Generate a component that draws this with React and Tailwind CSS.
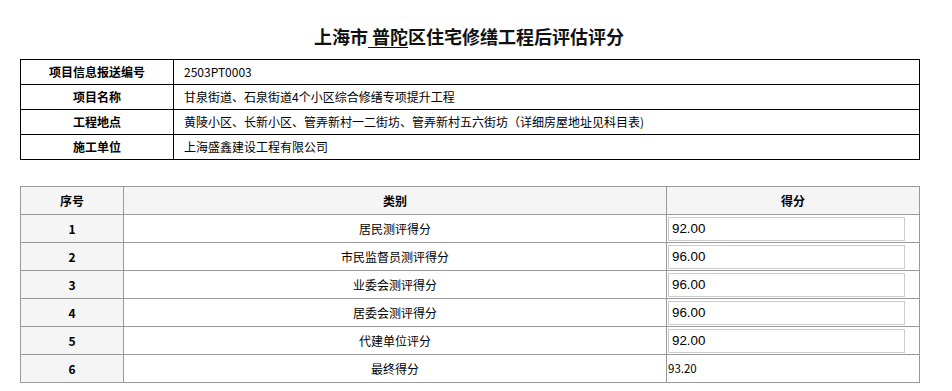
export default function App() {
  const info = [
    ["项目信息报送编号", "2503PT0003"],
    ["项目名称", "甘泉街道、石泉街道4个小区综合修缮专项提升工程"],
    ["工程地点", "黄陵小区、长新小区、管弄新村一二街坊、管弄新村五六街坊（详细房屋地址见科目表)"],
    ["施工单位", "上海盛鑫建设工程有限公司"],
  ];
  const rows = [
    ["1", "居民测评得分", "92.00"],
    ["2", "市民监督员测评得分", "96.00"],
    ["3", "业委会测评得分", "96.00"],
    ["4", "居委会测评得分", "96.00"],
    ["5", "代建单位评分", "92.00"],
  ];
  const font = { fontFamily: '"Noto Sans CJK SC", "Noto Sans", sans-serif' };
  return (
    <div className="w-[952px] h-[391px] bg-white text-black px-[20px] pt-[24px]" style={font}>
      <div className="flex justify-center text-[18px] leading-[24px] font-bold text-[#111] mb-[11px] pr-[14px]">
        <span>上海市</span>
        <span className="underline underline-offset-[3px] decoration-[1px]">&nbsp;普陀</span>
        <span>区住宅修缮工程后评估评分</span>
      </div>
      <div className="w-[900px] grid grid-cols-[153px_1fr] border-l border-t border-black text-[12px]">
        {info.map(([k, v]) => (
          <div key={k} className="contents">
            <div className="h-[25px] border-r border-b border-black flex items-center justify-center font-bold">
              {k}
            </div>
            <div className="h-[25px] border-r border-b border-black flex items-center pl-[10px]">
              {v}
            </div>
          </div>
        ))}
      </div>
      <div className="mt-[26px] w-[900px] grid grid-cols-[103px_543px_1fr] border-l border-t border-[#999] text-[12px]">
        <div className="h-[28px] border-r border-b border-[#999] bg-[#f5f5f5] flex items-center justify-center font-bold">序号</div>
        <div className="h-[28px] border-r border-b border-[#999] bg-[#f5f5f5] flex items-center justify-center font-bold">类别</div>
        <div className="h-[28px] border-r border-b border-[#999] bg-[#f5f5f5] flex items-center justify-center font-bold">得分</div>
        {rows.map(([n, c, s]) => (
          <div key={n} className="contents">
            <div className="h-[28px] border-r border-b border-[#999] bg-[#f5f5f5] flex items-center justify-center font-bold">{n}</div>
            <div className="h-[28px] border-r border-b border-[#999] flex items-center justify-center">{c}</div>
            <div className="h-[28px] border-r border-b border-[#999] flex items-center pl-[1px]">
              <input
                readOnly
                value={s}
                className="w-[237px] h-[24px] border border-[#ccc] px-[3px] text-[13.33px] text-black outline-none"
                style={{ fontFamily: '"Liberation Sans", Arial, sans-serif' }}
              />
            </div>
          </div>
        ))}
        <div className="h-[28px] border-r border-b border-[#999] bg-[#f5f5f5] flex items-center justify-center font-bold">6</div>
        <div className="h-[28px] border-r border-b border-[#999] flex items-center justify-center">最终得分</div>
        <div className="h-[28px] border-r border-b border-[#999] flex items-center pl-[1px] text-[11.5px]">93.20</div>
      </div>
    </div>
  );
}
